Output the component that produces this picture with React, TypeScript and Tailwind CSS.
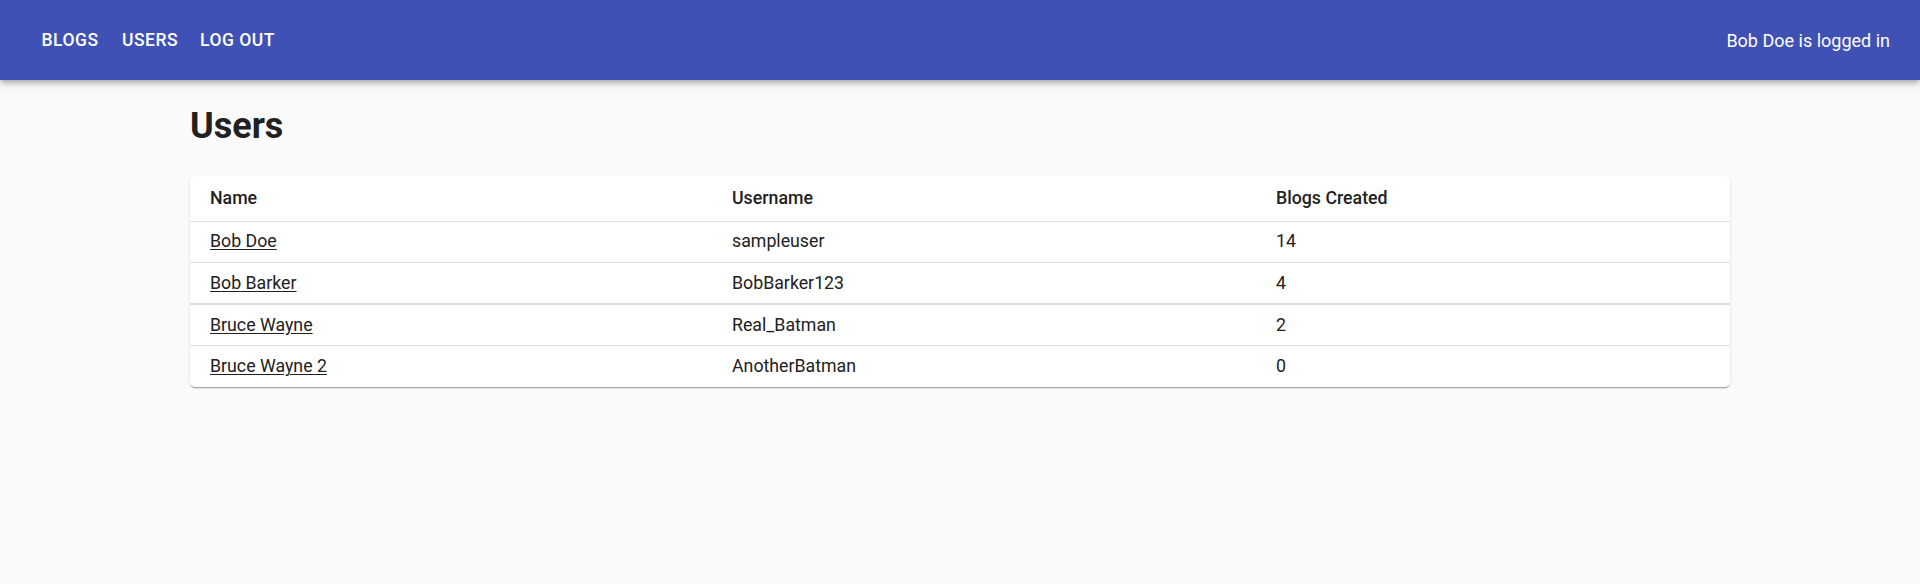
const users = [
  { name: 'Bob Doe', username: 'sampleuser', blogs: 14 },
  { name: 'Bob Barker', username: 'BobBarker123', blogs: 4 },
  { name: 'Bruce Wayne', username: 'Real_Batman', blogs: 2 },
  { name: 'Bruce Wayne 2', username: 'AnotherBatman', blogs: 0 },
];

const NavButton = ({ label }: { label: string }) => (
  <a className="flex min-w-[80px] items-center justify-center px-[10px] py-[7px] text-[17.5px] font-medium uppercase tracking-[0.5px] text-white">
    {label}
  </a>
);

export default function App() {
  return (
    <div className="min-h-[584px] bg-[#fafafa] font-['Roboto',sans-serif] text-[#212121]">
      <header className="relative z-10 flex h-[80px] items-center justify-between bg-[#3f51b5] px-[30px] shadow-[0_2px_5px_-1px_rgba(0,0,0,0.2),0_4px_6px_0_rgba(0,0,0,0.14),0_1px_12px_0_rgba(0,0,0,0.12)]">
        <nav className="flex items-center">
          <NavButton label="Blogs" />
          <NavButton label="Users" />
          <NavButton label="Log out" />
        </nav>
        <span className="text-[18px] text-white">Bob Doe is logged in</span>
      </header>

      <main className="mx-auto w-[1540px]">
        <h2 className="mt-[24px] mb-[27px] text-[36px] leading-[1.25] font-bold text-[#212121]">Users</h2>

        <div className="overflow-hidden rounded-[5px] bg-white shadow-[0_2px_1px_-1px_rgba(0,0,0,0.2),0_1px_1px_0_rgba(0,0,0,0.14),0_1px_3px_0_rgba(0,0,0,0.12)]">
          <table className="w-full border-collapse text-left text-[17.75px]">
            <thead>
              <tr className="h-[45px] border-b border-[#e0e0e0]">
                <th className="w-[522px] px-[20px] font-medium">Name</th>
                <th className="w-[544px] px-[20px] font-medium">Username</th>
                <th className="px-[20px] font-medium">Blogs Created</th>
              </tr>
            </thead>
            <tbody>
              {users.map((u, i) => (
                <tr
                  key={u.username}
                  className={
                    i === users.length - 1
                      ? 'h-[41.5px]'
                      : i === 1
                        ? 'h-[41.5px] border-b-2 border-[#e0e0e0]'
                        : 'h-[41.5px] border-b border-[#e0e0e0]'
                  }
                >
                  <td className="px-[20px]">
                    <a className="underline underline-offset-2">{u.name}</a>
                  </td>
                  <td className="px-[20px]">{u.username}</td>
                  <td className="px-[20px]">{u.blogs}</td>
                </tr>
              ))}
            </tbody>
          </table>
        </div>
      </main>
    </div>
  );
}
